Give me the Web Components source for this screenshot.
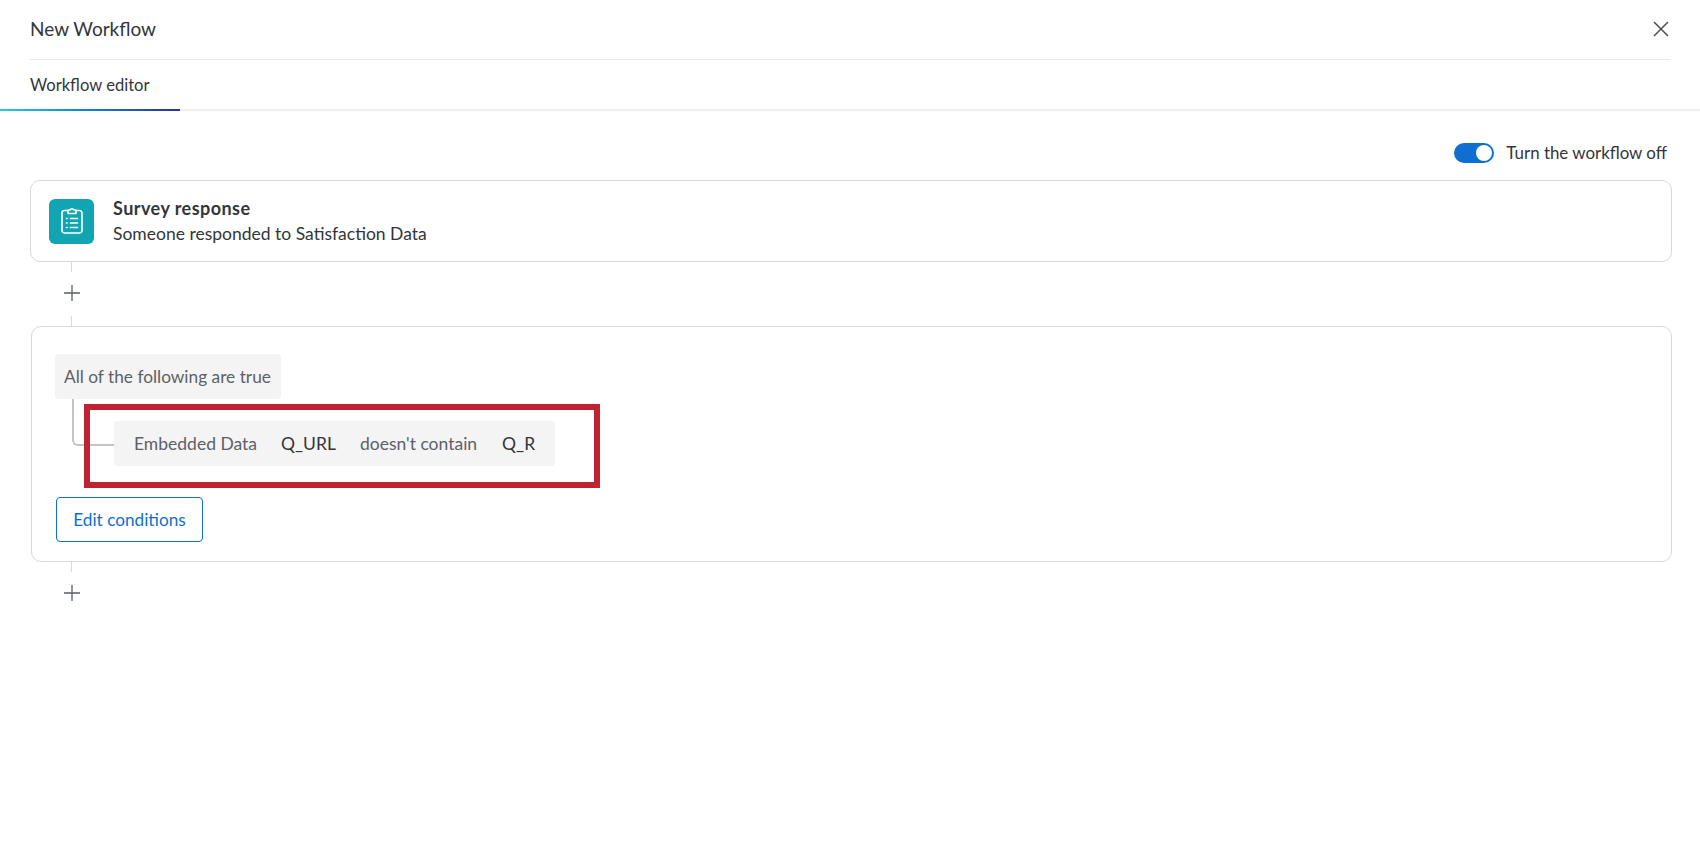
<!DOCTYPE html>
<html>
<head>
<meta charset="utf-8">
<title>New Workflow</title>
<style>
html, body { margin: 0; padding: 0; background: #fff; }
body { font-family: Lato, "Open Sans", sans-serif; color: #32363a; }
</style>
</head>
<body>
<workflow-page></workflow-page>

<template id="header-tpl">
  <style>
    :host { display: block; }
    .top {
      margin: 0 30px; height: 59px; border-bottom: 1px solid #e8e8e9;
      display: flex; align-items: center; justify-content: space-between;
    }
    h1 { margin: 0 0 3px; font-size: 19px; font-weight: 400; color: #32363a; }
    svg { display: block; margin-bottom: 1px; }
    .tabs { height: 49px; border-bottom: 2px solid #f0f0f1; }
    .tab {
      box-sizing: border-box; width: 180px; height: 51px; padding: 14px 0 0 30px;
      font-size: 16.6px; line-height: 22px;
      position: relative;
    }
    .tab::after {
      content: ""; position: absolute; left: 0; right: 0; bottom: 0; height: 2px;
      background: linear-gradient(90deg, #1fd0d6 0%, #1180d8 50%, #2a2fa8 100%);
    }
  </style>
  <div class="top">
    <h1><slot name="title"></slot></h1>
    <svg width="18" height="18" viewBox="0 0 18 18" fill="none" stroke="#4a4e52" stroke-width="1.5"><path d="M2 2l14 14M16 2L2 16"/></svg>
  </div>
  <div class="tabs"><div class="tab"><slot name="tab"></slot></div></div>
</template>

<template id="toggle-tpl">
  <style>
    :host { display: flex; align-items: center; justify-content: flex-end; font-size: 16.9px; color: #32363a; }
    .sw {
      width: 40px; height: 20px; border-radius: 10px; background: #0f6fd1;
      margin-right: 12px; position: relative;
    }
    .sw::after {
      content: ""; position: absolute; right: 2px; top: 2px; width: 16px; height: 16px;
      border-radius: 50%; background: #fff;
    }
    .label { margin-top: -1px; }
  </style>
  <span class="sw"></span><span class="label"><slot></slot></span>
</template>

<template id="card-tpl">
  <style>
    :host {
      display: block; box-sizing: border-box; background: #fff;
      border: 1px solid #d9d9da; border-radius: 10px;
    }
  </style>
  <slot></slot>
</template>

<template id="task-tpl">
  <style>
    :host { display: flex; align-items: center; height: 80px; padding-left: 18px; }
    .ico {
      width: 45px; height: 45px; border-radius: 6px; background: #11a5b4;
      display: flex; align-items: center; justify-content: center; margin-right: 19px;
    }
    .ico svg { margin-top: -2px; }
    .t { font-size: 18px; font-weight: 700; letter-spacing: .45px; line-height: 25px; color: #32363a; }
    .s { font-size: 17.5px; line-height: 25px; color: #32363a; }
  </style>
  <div class="ico">
    <svg width="22" height="27" viewBox="0 0 22 27" fill="none" stroke="#fff" stroke-width="1.6" stroke-linecap="round" stroke-linejoin="round">
      <path d="M7 3.500H3.500A2.500 2.500 0 0 0 1 6V23.500A2.500 2.500 0 0 0 3.500 26h15a2.500 2.500 0 0 0 2.500-2.500V6A2.500 2.500 0 0 0 18.500 3.500H15"/>
      <path d="M7 6.500V3h2.200a1.900 1.900 0 0 1 3.600 0H15v3.500z"/>
      <path d="M9.500 11.500h7M9.500 16h7M9.500 20.500h7"/>
      <path d="M5.500 11.500h.6M5.500 16h.6M5.500 20.500h.6"/>
    </svg>
  </div>
  <div>
    <div class="t"><slot name="title"></slot></div>
    <div class="s"><slot name="sub"></slot></div>
  </div>
</template>

<template id="add-tpl">
  <style>
    :host { display: block; width: 84px; }
    .ln { width: 1px; height: 10px; background: #d9d9da; margin-left: 41px; }
    .p { height: 44px; display: flex; align-items: center; justify-content: center; }
    svg { display: block; margin-top: -2px; }
  </style>
  <div class="ln"></div>
  <div class="p">
    <svg width="16" height="16" viewBox="0 0 16 16" stroke="#5a5e62" stroke-width="1.3"><path d="M8 0v16M0 8h16"/></svg>
  </div>
  <slot></slot>
</template>

<template id="chip-tpl">
  <style>
    :host {
      display: inline-flex; align-items: center; height: 45px; box-sizing: border-box;
      background: #f4f4f4; border-radius: 4px; font-size: 17.5px; color: #5d6166;
    }
  </style>
  <slot></slot>
</template>

<template id="condition-tpl">
  <style>
    :host { display: block; position: relative; }
    .tree {
      position: absolute; left: 17px; top: 0; width: 42px; height: 47px;
      border-left: 2px solid #c4c4c5; border-bottom: 2px solid #c4c4c5;
      border-bottom-left-radius: 6px; box-sizing: border-box;
    }
    .row { padding: 22px 0 0 59px; }
    .mark {
      position: absolute; left: 29px; top: 5px; width: 516px; height: 84px;
      box-sizing: border-box; border: 6px solid #bf2231;
    }
  </style>
  <div class="tree"></div>
  <div class="mark"></div>
  <div class="row"><slot></slot></div>
</template>

<template id="button-tpl">
  <style>
    :host {
      display: inline-flex; align-items: center; justify-content: center;
      box-sizing: border-box; width: 147px; height: 45px;
      border: 1px solid #0f6fd1; border-radius: 4px; color: #0f6fd1; font-size: 17.2px; background: #fff;
    }
  </style>
  <slot></slot>
</template>

<template id="page-tpl">
  <style>
    :host { display: block; width: 1700px; height: 850px; overflow: hidden; font-family: Lato, "Open Sans", sans-serif; }
    .body { padding: 32px 28px 0 30px; }
    wf-toggle { margin-right: 5px; height: 20px; margin-bottom: 17px; }
    .c2 { margin-left: 1px; padding: 27px 0 19px 23px; height: 236px; }
    wf-card.c1 { height: 82px; }
    .lnb { width: 1px; height: 10px; background: #d9d9da; margin-left: 41px; }
    .v { color: #32363a; }
    .pill1 { padding: 0 9px; width: 226px; white-space: nowrap; font-size: 17.3px; }
    .pill2 { padding: 0 20px; width: 441px; white-space: nowrap; }
    .gap1 { margin-right: 24px; }
    .gap2 { margin-right: 24px; }
    .gap3 { margin-right: 25px; }
    .btn { margin: 31px 0 0 1px; display: block; }
  </style>
  <wf-header>
    <span slot="title">New Workflow</span>
    <span slot="tab">Workflow editor</span>
  </wf-header>
  <div class="body">
    <wf-toggle>Turn the workflow off</wf-toggle>
    <wf-card class="c1">
      <wf-task>
        <span slot="title">Survey response</span>
        <span slot="sub">Someone responded to Satisfaction Data</span>
      </wf-task>
    </wf-card>
    <wf-add><div class="lnb"></div></wf-add>
    <wf-card class="c2">
      <wf-chip class="pill1">All of the following are true</wf-chip>
      <wf-condition>
        <wf-chip class="pill2">
          <span class="gap1">Embedded Data</span>
          <span class="v gap2">Q_URL</span>
          <span class="gap3">doesn't contain</span>
          <span class="v">Q_R</span>
        </wf-chip>
      </wf-condition>
      <div class="btn"><wf-button>Edit conditions</wf-button></div>
    </wf-card>
    <wf-add></wf-add>
  </div>
</template>

<script>
function simple(name, tpl) {
  customElements.define(name, class extends HTMLElement {
    constructor() {
      super();
      const shadow = this.attachShadow({mode: 'open'});
      shadow.appendChild(document.getElementById(tpl).content.cloneNode(true));
    }
  });
}
// leaf elements first, the page last
simple('wf-header', 'header-tpl');
simple('wf-toggle', 'toggle-tpl');
simple('wf-card', 'card-tpl');
simple('wf-task', 'task-tpl');
simple('wf-add', 'add-tpl');
simple('wf-chip', 'chip-tpl');
simple('wf-condition', 'condition-tpl');
simple('wf-button', 'button-tpl');
simple('workflow-page', 'page-tpl');
</script>
</body>
</html>
